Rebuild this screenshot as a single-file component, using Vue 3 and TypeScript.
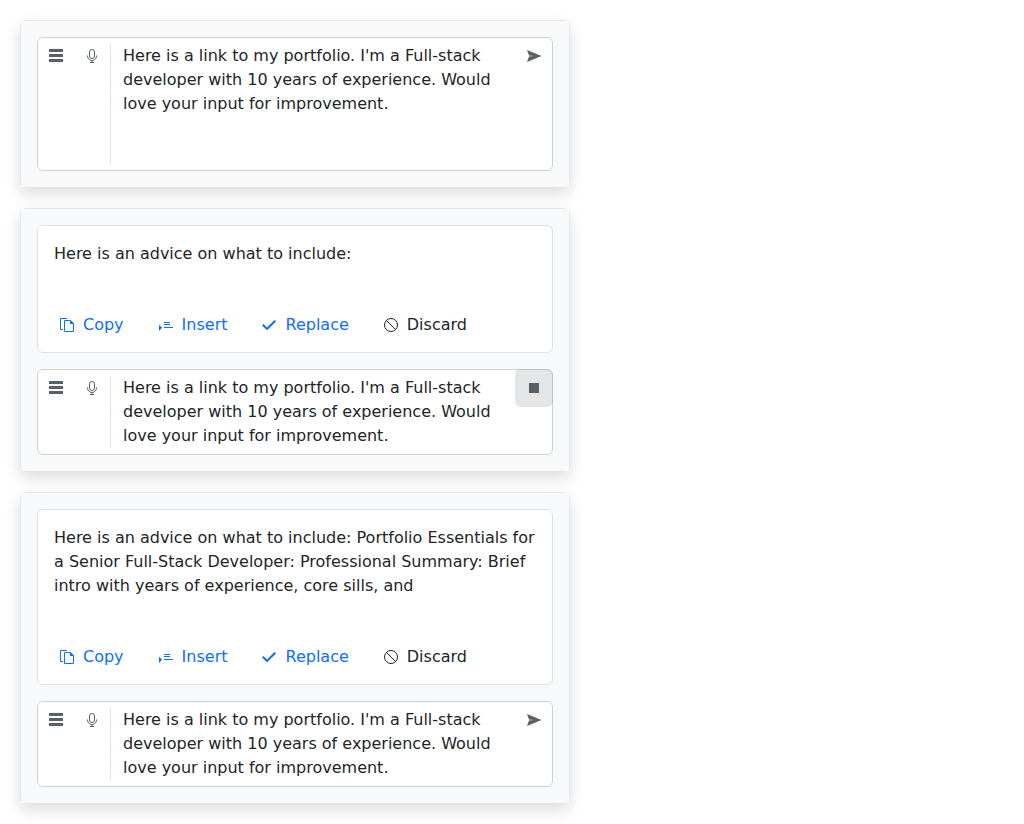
<script setup lang="ts">
interface Prompt {
  id: string
  rows: number
  output: string
  busy: boolean
  text: string
}

const request =
  "Here is a link to my portfolio. I'm a Full-stack developer with 10 years of experience. Would love your input for improvement."

const prompts: Prompt[] = [
  { id: 'draft', rows: 5, output: '', busy: false, text: request },
  { id: 'streaming', rows: 3, output: 'Here is an advice on what to include:', busy: true, text: request },
  {
    id: 'answered',
    rows: 3,
    output:
      'Here is an advice on what to include: Portfolio Essentials for a Senior Full-Stack Developer: Professional Summary: Brief intro with years of experience, core sills, and',
    busy: false,
    text: request,
  },
]
</script>

<template>
  <main class="page">
    <section v-for="prompt in prompts" :key="prompt.id" class="popup">
      <div class="content">
        <article v-if="prompt.output" class="card">
          <p class="card-body">{{ prompt.output }}</p>
          <div class="actions">
            <button type="button" class="action primary">
              <svg class="icon" viewBox="0 0 16 16" aria-hidden="true">
                <path d="M8 1.5H1.500V12.500H4" fill="none" stroke="currentColor" />
                <path d="M5.500 3.500H11.500L14.500 6.500V14.500H5.500Z" fill="none" stroke="currentColor" />
                <path d="M11 3V7H15Z" fill="currentColor" />
              </svg>
              <span>Copy</span>
            </button>
            <button type="button" class="action primary">
              <svg class="icon" viewBox="0 0 16 16" aria-hidden="true">
                <path d="M1 7.500L4 10.800L1 14ZM6 5H12V6H6ZM6 7H12V8H6ZM6 10H15V11H6Z" fill="currentColor" />
              </svg>
              <span>Insert</span>
            </button>
            <button type="button" class="action primary">
              <svg class="icon" viewBox="0 0 16 16" aria-hidden="true">
                <path d="M13.500 3L6 10.500L2.500 7L1 8.500L6 13.300L15 4.500Z" fill="currentColor" />
              </svg>
              <span>Replace</span>
            </button>
            <button type="button" class="action">
              <svg class="icon" viewBox="0 0 16 16" aria-hidden="true">
                <circle cx="8" cy="8" r="6.5" fill="none" stroke="currentColor" />
                <path d="M3.400 3.400L12.600 12.600" stroke="currentColor" />
              </svg>
              <span>Discard</span>
            </button>
          </div>
        </article>

        <div class="prompt">
          <div class="tools">
            <button type="button" class="tool" aria-label="Menu">
              <svg class="icon" viewBox="0 0 16 16" aria-hidden="true">
                <path d="M1 1H15V4H1ZM1 6H15V9H1ZM1 11H15V14H1Z" fill="currentColor" />
              </svg>
            </button>
            <button type="button" class="tool" aria-label="Dictate">
              <svg class="icon" viewBox="0 0 16 16" fill="none" stroke="currentColor" aria-hidden="true">
                <rect x="5.500" y="1.500" width="5" height="9" rx="2.500" />
                <path d="M3.500 7.500V8A4.500 4.500 0 0 0 12.500 8V7.500M8 12.500V14.500M6 14.500H10" />
              </svg>
            </button>
          </div>
          <textarea class="field" :rows="prompt.rows" :value="prompt.text" aria-label="Prompt" spellcheck="false"></textarea>
          <button type="button" class="send" :class="{ busy: prompt.busy }" :aria-label="prompt.busy ? 'Stop' : 'Send'">
            <svg class="icon" viewBox="0 0 16 16" aria-hidden="true">
              <path v-if="prompt.busy" d="M3 3H13V13H3Z" fill="currentColor" />
              <path v-else d="M1 2L15.500 8L1 14L3 8.500L8 8L3 7.500Z" fill="currentColor" />
            </svg>
          </button>
        </div>
      </div>
    </section>
  </main>
</template>

<style>
body {
  margin: 0;
  background: #fff;
}
</style>

<style scoped>
.page {
  display: flex;
  flex-direction: column;
  gap: 20px;
  max-width: 550px;
  padding: 20px;
  color: #212529;
  font-family: "DejaVu Sans", sans-serif;
  font-size: 16px;
  line-height: 24px;
}

.popup {
  border: 1px solid rgba(0, 0, 0, 0.1);
  border-radius: 6px;
  box-shadow: 0 6px 16px rgba(0, 0, 0, 0.14);
}

.content {
  display: flex;
  flex-direction: column;
  gap: 16px;
  padding: 16px;
  background: #f8f9fa;
}

.card {
  border: 1px solid #e0e1e2;
  border-radius: 6px;
  background: #fff;
}

.card-body {
  margin: 0;
  padding: 16px 16px 40px;
}

.actions {
  display: flex;
  flex-wrap: wrap;
  gap: 8px;
  padding: 0 8px 8px;
}

button {
  display: inline-flex;
  align-items: center;
  justify-content: center;
  box-sizing: border-box;
  border: 0;
  background: transparent;
  color: inherit;
  font: inherit;
  cursor: pointer;
}

.action {
  gap: 8px;
  height: 38px;
  padding: 0 13px;
  border-radius: 6px;
}

.primary {
  color: #0d6efd;
}

.icon {
  display: block;
  flex: none;
  width: 16px;
  height: 16px;
}

.prompt {
  display: flex;
  align-items: flex-start;
  border: 1px solid #cfd0d1;
  border-radius: 6px;
  background: #fff;
}

.tools {
  display: flex;
}

.tool {
  width: 36px;
  height: 36px;
  padding: 0;
  color: #596168;
}

.field {
  flex: 1;
  min-width: 0;
  margin: 6px 0;
  padding: 0 12px;
  border: 0;
  border-left: 1px solid #dfe0e1;
  outline: 0;
  background: transparent;
  color: inherit;
  font: inherit;
  resize: none;
  overflow: hidden;
}

.send {
  width: 38px;
  height: 38px;
  margin: -1px -1px 0 0;
  padding: 0;
  border-radius: 6px;
  color: #596168;
}

.busy {
  background: rgba(92, 99, 106, 0.17);
}
</style>
